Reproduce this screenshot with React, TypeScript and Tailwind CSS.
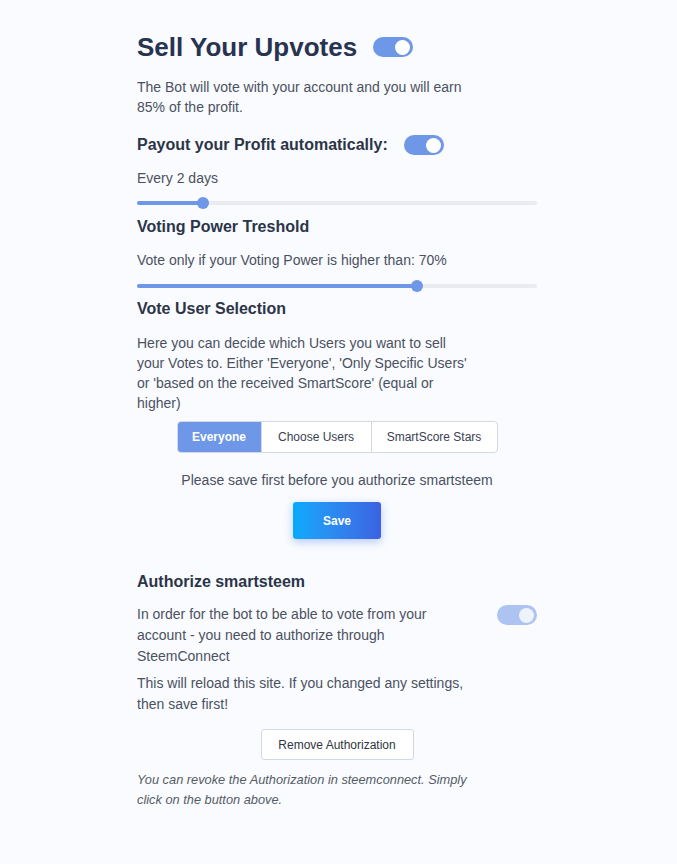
import { useState } from 'react'

function Toggle({ on = true, disabled = false }: { on?: boolean; disabled?: boolean }) {
  return (
    <div
      className={`flex h-[20px] w-[40px] shrink-0 items-center rounded-full px-[3px] ${
        disabled ? 'bg-[#adc3f1]' : 'bg-[#6e97e8]'
      } ${on ? 'justify-end' : 'justify-start'}`}
    >
      <div className={`h-[15px] w-[15px] rounded-full ${disabled ? 'bg-[#eef2fb]' : 'bg-white'}`} />
    </div>
  )
}

function Slider({ percent }: { percent: number }) {
  return (
    <div className="relative flex h-[12px] items-center">
      <div className="h-[4px] w-full rounded-full bg-[#e9ebf0]" />
      <div className="absolute left-0 h-[4px] rounded-full bg-[#6e97e8]" style={{ width: `${percent}%` }} />
      <div
        className="absolute h-[12px] w-[12px] -translate-x-1/2 rounded-full bg-[#6e97e8]"
        style={{ left: `${percent}%` }}
      />
    </div>
  )
}

export default function App() {
  const [selection, setSelection] = useState('Everyone')
  const options = ['Everyone', 'Choose Users', 'SmartScore Stars']

  return (
    <div
      className="min-h-[864px] bg-[#f9fbfe] text-[#4b5161]"
      style={{ fontFamily: '"Liberation Sans", Arial, sans-serif' }}
    >
      <div className="mx-auto w-[403px] pt-[31px] pr-[3px]">
        {/* Titel */}
        <div className="flex h-[32px] items-center gap-[16px]">
          <h1 className="text-[26px] font-bold leading-[32px] text-[#283350]">Sell Your Upvotes</h1>
          <Toggle />
        </div>
        <p className="mt-[14px] max-w-[335px] text-[14px] leading-[20px]">
          The Bot will vote with your account and you will earn 85% of the profit.
        </p>

        {/* Auszahlung */}
        <div className="mt-[16px] flex h-[24px] items-center gap-[16px]">
          <h2 className="text-[16px] font-bold leading-[24px] text-[#2c3548]">Payout your Profit automatically:</h2>
          <Toggle />
        </div>
        <p className="mt-[11px] text-[14px] leading-[20px]">Every 2 days</p>
        <div className="mt-[9px]">
          <Slider percent={16.5} />
        </div>

        {/* Voting Power */}
        <h2 className="mt-[6px] text-[16px] font-bold leading-[24px] text-[#2c3548]">Voting Power Treshold</h2>
        <p className="mt-[11px] text-[14px] leading-[20px]">Vote only if your Voting Power is higher than: 70%</p>
        <div className="mt-[10px]">
          <Slider percent={70} />
        </div>

        {/* Auswahl */}
        <h2 className="mt-[5px] text-[16px] font-bold leading-[24px] text-[#2c3548]">Vote User Selection</h2>
        <p className="mt-[12px] max-w-[335px] text-[14px] leading-[20px]">
          Here you can decide which Users you want to sell your Votes to. Either 'Everyone', 'Only Specific Users' or
          'based on the received SmartScore' (equal or higher)
        </p>
        <div className="mt-[8px] flex justify-center">
          <div className="flex h-[32px] overflow-hidden rounded-[4px] border border-[#d3d9e2] bg-white text-[12px]">
            {options.map((o, i) => (
              <button
                key={o}
                onClick={() => setSelection(o)}
                className={`h-full ${i === 0 ? 'w-[83px]' : i === 1 ? 'w-[110px] border-l border-[#d3d9e2]' : 'w-[126px] border-l border-[#d3d9e2]'} ${
                  selection === o ? 'bg-[#6e97e8] font-bold text-white' : 'text-[#3b4152]'
                }`}
              >
                {o}
              </button>
            ))}
          </div>
        </div>
        <p className="mt-[17px] text-center text-[14px] leading-[20px]">Please save first before you authorize smartsteem</p>
        <div className="mt-[12px] flex justify-center">
          <button className="h-[37px] w-[88px] rounded-[3px] bg-gradient-to-r from-[#05aafc] to-[#3a62e2] text-[12px] font-bold text-white shadow-[0_3px_8px_rgba(60,110,230,0.35)]">
            Save
          </button>
        </div>

        {/* Autorisierung */}
        <h2 className="mt-[31px] text-[16px] font-bold leading-[24px] text-[#2c3548]">Authorize smartsteem</h2>
        <div className="mt-[10px] flex items-start justify-between">
          <div className="max-w-[335px]">
            <p className="text-[14px] leading-[21px]">
              In order for the bot to be able to vote from your account - you need to authorize through SteemConnect
            </p>
            <p className="mt-[6px] text-[14px] leading-[21px]">
              This will reload this site. If you changed any settings, then save first!
            </p>
          </div>
          <div className="mt-[1px]">
            <Toggle disabled />
          </div>
        </div>
        <div className="mt-[14px] flex justify-center">
          <button className="h-[31px] w-[153px] rounded-[3px] border border-[#d3d9e2] bg-white text-[12px] text-[#2f3440]">
            Remove Authorization
          </button>
        </div>
        <p className="mt-[10px] max-w-[340px] text-[12.8px] italic leading-[20px] text-[#555b66]">
          You can revoke the Authorization in steemconnect. Simply click on the button above.
        </p>
      </div>
    </div>
  )
}
